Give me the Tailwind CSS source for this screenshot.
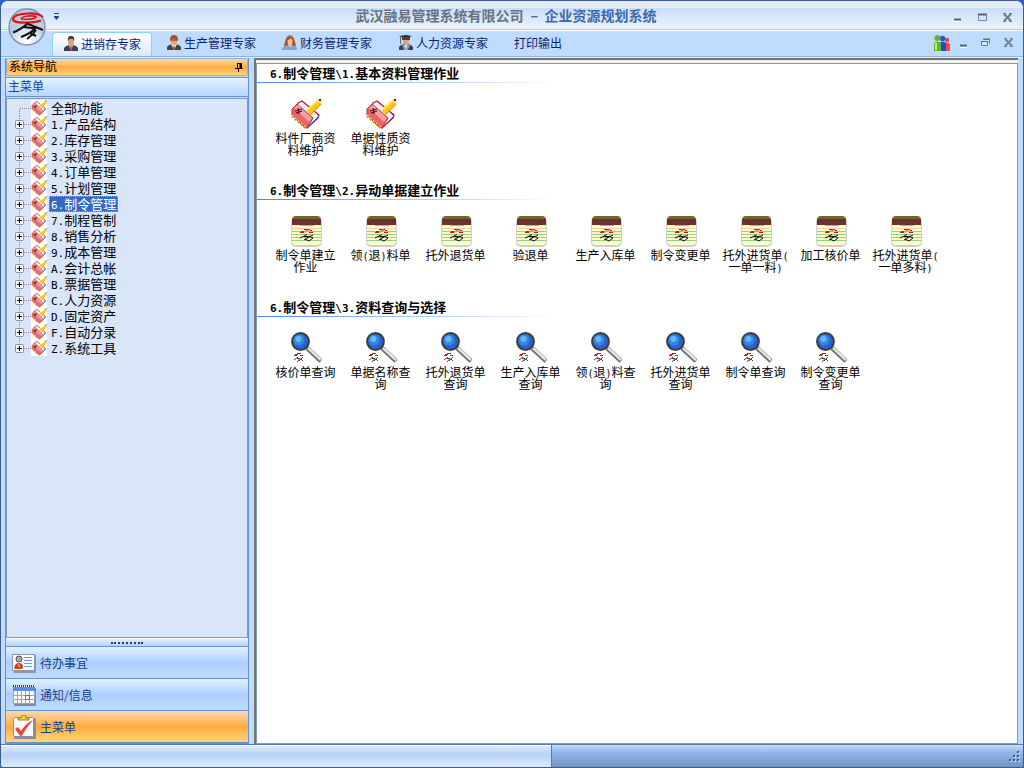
<!DOCTYPE html>
<html lang="zh-CN">
<head>
    <meta charset="UTF-8">
    <meta name="viewport" content="width=device-width, initial-scale=1.0">
    <title>武汉融易管理系统有限公司 - 企业资源规划系统</title>
    <script src="https://cdn.jsdelivr.net/npm/@tailwindcss/browser@4"></script>
</head>
<body class="bg-[#2f62d0] font-['Noto_Sans_CJK_SC',sans-serif] text-xs text-black">

    <!-- Icon sprites -->
    <svg class="hidden">
        <symbol id="book" viewBox="0 0 32 32">
            <path d="M8 5L12 3L29 17L28 20L17 30L5 12Z" fill="#e4f0fc" stroke="#c01830" stroke-width="1.3"/>
            <path d="M26 15L29 18L19 28" fill="none" stroke="#3c4ca0" stroke-width="1"/>
            <path d="M2 11L7 6L23 20L17 30L13 28L2 17Z" fill="#ea6468" stroke="#c03040"/>
            <path d="M4 10L8 7L22 20L19 24Z" fill="#f4a0a0"/>
            <path d="M5 13L12 11M8 10L9 16M6 15L12 13" stroke="#501020" stroke-width="1.2"/>
            <path d="M2 18L16 30" stroke="#c8901c" stroke-width="2.6" stroke-dasharray="2 2"/>
            <path d="M2 17L16 29" stroke="#ffe860" stroke-dasharray="2 2"/>
            <path d="M18 14L29 4" stroke="#ffc814" stroke-width="5.500"/>
            <path d="M17 12L28 2" stroke="#fff06a" stroke-width="1.600"/>
            <path d="M20 17L31 6" stroke="#f09a18" stroke-width="1.200"/>
            <path d="M27 1L31 1L32 5L30 6Z" fill="#f0dc90"/>
            <path d="M29 1h2v2h-2z" fill="#333"/>
        </symbol>
        <symbol id="note" viewBox="0 0 32 32">
            <rect x="1" y="2" width="31" height="30" rx="5" fill="#cfcfcf"/>
            <rect x="2" y="1" width="29" height="29" rx="4" fill="#fffcc4"/>
            <path d="M2 5Q2 1 6 1H27Q31 1 31 5Z" fill="#6b6a2c"/>
            <path d="M2 4H31V10H2Z" fill="#6b3030"/>
            <path d="M10 10.500H24" stroke="#b9a9a0"/>
            <path d="M2 13.500H31" stroke="#f3cdb8"/>
            <path d="M2 16.500H31M2 19.500H31M2 22.500H31M2 25.500H31" stroke="#94cf94"/>
            <path d="M10 17.500H14M19 17.500H23" stroke="#d81010"/>
            <path d="M11 16.500H15M20 15.500H22M14 14.500H20" stroke="#d81010"/>
            <path d="M14 17L19 15" stroke="#f08080" stroke-width="1.500"/>
            <path d="M10 23L17 19.500M14 21.500H19L14 25M17 23L23 20M19 21L23 23L19 26L15 24" fill="none" stroke="#111"/>
        </symbol>
        <symbol id="lens" viewBox="0 0 32 32">
            <path d="M17 16L31 29" stroke="#6e6e6e" stroke-width="4.500"/>
            <path d="M18 16L31 28" stroke="#e6e6e6" stroke-width="2.400"/>
            <circle cx="10.500" cy="9.500" r="8.400" fill="#2a62d0" stroke="#3c3c3c" stroke-width="2"/>
            <circle cx="9" cy="8" r="5.500" fill="#3388e6"/>
            <circle cx="8.500" cy="7" r="3" fill="#64b8fa"/>
            <path d="M4 23.500H7M5 22.500H8M10 23.500H13M7 21.500H11" stroke="#d81010"/>
            <path d="M4 28L8 25M7 26.500H10L7 30M9 29L13 25M11 27L13 29" fill="none" stroke="#333" stroke-width="0.900"/>
        </symbol>
        <symbol id="man" viewBox="0 0 16 16">
            <path d="M1 15V12Q2 10 6 9H10Q14 10 15 12V15Z" fill="#36415f"/>
            <path d="M6 9L8 15L10 9Z" fill="#fff"/>
            <path d="M8 10V15" stroke="#d02020" stroke-width="1.400"/>
            <ellipse cx="8" cy="5.500" rx="3" ry="4.500" fill="#d9a27a"/>
            <path d="M5 5Q4 0 8 0T11 5Q10 2 8 3Q6 2 5 5Z" fill="#44362c"/>
        </symbol>
        <symbol id="worker" viewBox="0 0 16 16">
            <path d="M1 15V12Q2 10 6 9H10Q14 10 15 12V15Z" fill="#40454c"/>
            <path d="M5 9L8 15L11 9Z" fill="#fff"/>
            <path d="M8 11V15" stroke="#c83010" stroke-width="1.400"/>
            <ellipse cx="8" cy="6" rx="3.200" ry="4.500" fill="#e0aa78"/>
            <path d="M4 5Q4 0 8 0T12 5Q8 3 4 5Z" fill="#b5501c"/>
            <path d="M4 5H12" stroke="#7a3010"/>
        </symbol>
        <symbol id="woman" viewBox="0 0 16 16">
            <path d="M2 11Q4 0 8 0T14 11Z" fill="#b0501e"/>
            <path d="M0 15V13Q2 11 6 10H10Q14 11 15 13V15Z" fill="#7ba4da"/>
            <path d="M6 9L8 13L10 9Z" fill="#f2c39c"/>
            <ellipse cx="8" cy="6.500" rx="2.500" ry="3.500" fill="#f0bf98"/>
            <path d="M5 5Q8 5 9 3Q10 5 11 5V3L8 1L5 3Z" fill="#b0501e"/>
            <path d="M6 1H10" stroke="#8aa0c8"/>
        </symbol>
        <symbol id="graduate" viewBox="0 0 16 16">
            <path d="M1 15V12Q2 10 6 9H10Q14 10 15 12V15Z" fill="#38404e"/>
            <path d="M4 10L6 15H10L12 10Z" fill="#7da7dc"/>
            <path d="M6 9L8 13L10 9Z" fill="#fff"/>
            <ellipse cx="8" cy="6.500" rx="3" ry="4" fill="#d9a27a"/>
            <path d="M1 1L8 0L14 1L8 4Z" fill="#2c2f38"/>
            <path d="M4 2H12V5H4Z" fill="#41454f"/>
            <path d="M2.500 2V9" stroke="#666"/>
        </symbol>
        <symbol id="branch" viewBox="0 0 26 16">
            <path d="M8.500 0V16M13 8.500H21" stroke="#8a8a8a" stroke-dasharray="1 1"/>
        </symbol>
        <symbol id="branch-first" viewBox="0 0 26 16">
            <path d="M8.500 9V16M9 8.500H21" stroke="#8a8a8a" stroke-dasharray="1 1"/>
        </symbol>
        <symbol id="branch-last" viewBox="0 0 26 16">
            <path d="M8.500 0V8M13 8.500H21" stroke="#8a8a8a" stroke-dasharray="1 1"/>
        </symbol>
        <symbol id="plus" viewBox="0 0 26 16">
            <rect x="4.500" y="4.500" width="8" height="8" rx="1" fill="#f6f4ee" stroke="#7f92ad"/>
            <path d="M6 8.500H11M8.500 6V11" stroke="#000"/>
        </symbol>
    </svg>

    <div class="relative flex h-screen min-h-[480px] flex-col overflow-hidden rounded-t-lg rounded-b-sm border border-[#3c5a8c] bg-[#bfdbff]">

        <!-- Title bar -->
        <header class="flex h-[29px] shrink-0 items-center border-b border-[#a9cdf3] bg-linear-to-b from-[#e4ecfa] from-25% via-[#cbdef7] via-25% to-[#e8f3fe]">
            <div class="flex w-[62px] justify-end pt-1">
                <button type="button" aria-label="自定义快速访问工具栏" class="h-3 w-3">
                    <svg viewBox="0 0 12 12" class="h-3 w-3"><path d="M3 2.500H8M3 5.500H8" stroke="#1e4596"/><path d="M3 6H8L5.500 9Z" fill="#1e4596"/></svg>
                </button>
            </div>
            <h1 class="flex-1 text-center text-sm font-bold text-[#69727f]">武汉融易管理系统有限公司 <span class="ml-1 text-[#3e6aaa]">– &nbsp;企业资源规划系统</span></h1>
            <div class="flex w-[74px] gap-[9px] pt-1">
                <button type="button" aria-label="最小化" class="h-4 w-4"><svg viewBox="0 0 16 16" class="h-4 w-4"><path d="M5 10.500H12" stroke="#5b6470" stroke-width="2"/><path d="M5 12.500H12" stroke="#fff"/></svg></button>
                <button type="button" aria-label="最大化" class="h-4 w-4"><svg viewBox="0 0 16 16" class="h-4 w-4"><path d="M4.500 5.500H12.500V11.500H4.500Z" fill="#d7e6fa" stroke="#7388a8"/><path d="M4 5.500H13" stroke="#5b6470" stroke-width="2"/></svg></button>
                <button type="button" aria-label="关闭" class="h-4 w-4"><svg viewBox="0 0 16 16" class="h-4 w-4"><path d="M5 5L12 12M12 5L5 12" stroke="#6d7c92" stroke-width="2"/><path d="M4 4.500H7M10 4.500H13M4 12.500H7M10 12.500H13" stroke="#6d7c92"/></svg></button>
            </div>
        </header>

        <!-- Ribbon tabs -->
        <nav class="flex h-[27px] shrink-0 items-end border-t border-b border-t-white border-b-[#8db2e3] bg-[#bfdbff] pl-[51px] text-[#0b1f73]">
            <button type="button" class="mr-[1px] flex h-6 items-center gap-[2px] rounded-t-sm border border-b-0 border-[#8fd0ee] bg-linear-to-b from-white to-[#dbe8f9] px-[10px] pb-[2px]"><svg class="h-4 w-4"><use href="#man"/></svg>进销存专家</button>
            <button type="button" class="flex h-6 items-center gap-[2px] px-[13px] pb-[2px]"><svg class="h-4 w-4"><use href="#worker"/></svg>生产管理专家</button>
            <button type="button" class="flex h-6 items-center gap-[2px] px-[13px] pb-[2px]"><svg class="h-4 w-4"><use href="#woman"/></svg>财务管理专家</button>
            <button type="button" class="flex h-6 items-center gap-[2px] px-[13px] pb-[2px]"><svg class="h-4 w-4"><use href="#graduate"/></svg>人力资源专家</button>
            <button type="button" class="flex h-6 items-center px-[13px] pb-[2px]">打印输出</button>
            <div class="ml-auto flex h-6 items-center gap-[6px] pr-[7px] pb-[2px]">
                <button type="button" aria-label="用户" class="h-4 w-4">
                    <svg viewBox="0 0 16 16" class="h-4 w-4">
                        <circle cx="13" cy="5" r="2.300" fill="#e8484c"/><path d="M10 16V9Q13 6 16 9V16Z" fill="#ea4c52"/>
                        <circle cx="8.500" cy="3.500" r="2.800" fill="#2858c8"/><path d="M5 16V8Q9 5 12 8V16Z" fill="#1e50c4"/>
                        <circle cx="3.500" cy="3" r="3" fill="#5cb82a"/><path d="M0 16V8Q3 5 7 8V16Z" fill="#5cb82a"/><path d="M2 8V15" stroke="#b8ec90" stroke-width="2"/>
                    </svg>
                </button>
                <button type="button" aria-label="最小化子窗口" class="h-4 w-4"><svg viewBox="0 0 16 16" class="h-4 w-4"><path d="M4 10.500H11" stroke="#5b6470" stroke-width="2"/><path d="M4 12.500H11" stroke="#fff"/></svg></button>
                <button type="button" aria-label="还原子窗口" class="h-4 w-4"><svg viewBox="0 0 16 16" class="h-4 w-4"><path d="M5.500 4.500H11.500V8.500M3.500 6.500H9.500V10.500H3.500Z" fill="#d7e6fa" stroke="#6d7c92"/><path d="M5 4H12M3 6.500H10" stroke="#5b6470"/></svg></button>
                <button type="button" aria-label="关闭子窗口" class="h-4 w-4"><svg viewBox="0 0 16 16" class="h-4 w-4"><path d="M5 4L12 11M12 4L5 11" stroke="#7b8492" stroke-width="2"/><path d="M4 3.500H7M10 3.500H13M4 11.500H7M10 11.500H13" stroke="#7b8492"/></svg></button>
            </div>
        </nav>

        <!-- Application button, overlaps title bar and tabs -->
        <button type="button" aria-label="应用程序菜单" class="absolute top-[7px] left-[7px] h-[38px] w-[38px]">
            <svg viewBox="0 0 38 38" class="h-[38px] w-[38px]">
                <defs><radialGradient id="orb" cy="0.9"><stop offset="0" stop-color="#fff"/><stop offset="0.600" stop-color="#dde6f2"/><stop offset="1" stop-color="#bccbe0"/></radialGradient></defs>
                <circle cx="19" cy="19" r="18" fill="url(#orb)" stroke="#7f8fa8" stroke-width="1.300"/>
                <path d="M35 9Q30 5 20 5.500Q6 6 5 11Q5 15 18 14.500Q28 14.500 33 12.500" fill="none" stroke="#e01414" stroke-width="2.200"/>
                <path d="M13 11Q26 12 28 9Q27 7.500 20 8Q14 8.500 13 11" fill="none" stroke="#e01414" stroke-width="1.700"/>
                <path d="M20 15Q14 21 5 24.500M20 16L35 22M16 19L27 20.500Q22 26 13 29M28 22Q25 27 19 31M22 25L28 28" fill="none" stroke="#111" stroke-width="2"/>
            </svg>
        </button>

        <div class="flex min-h-0 flex-1 border-t border-[#e3efff]">
            <!-- Navigation pane -->
            <aside class="flex w-[248px] shrink-0 flex-col border-r border-[#6593cf] pl-1">
                <div class="flex h-full flex-col border-l border-[#6593cf]">
                    <div class="flex h-[18px] shrink-0 items-center justify-between rounded-xs border border-[#8fb0e0] bg-linear-to-b from-[#ffd9a3] via-[#ffad47] to-[#ffd274] pl-[2px]">
                        <h2 class="pb-[2px]">系统导航</h2>
                        <button type="button" aria-label="自动隐藏" class="h-4 w-4"><svg viewBox="0 0 16 16" class="h-4 w-4"><path d="M6.500 4.500H10.500V9.500M6.500 4V9.500M4 9.500H12M7.500 10V13" fill="none" stroke="#000"/><path d="M9.500 4V9" stroke="#000" stroke-width="2"/></svg></button>
                    </div>
                    <h3 class="mt-[1px] flex h-5 shrink-0 items-center border-y border-[#6593cf] bg-linear-to-b from-[#e6f2ff] to-[#b5d6ff] px-[2px] pb-[2px] text-[#1b4495]">主菜单</h3>
                    <ul id="tree" class="mt-[1px] min-h-0 flex-1 overflow-hidden border border-[#7f9db9] bg-[#d9e5f8] pt-[1px] pl-1 text-[13px] leading-4"></ul>
                    <div class="flex h-2 shrink-0 items-center justify-center border-t border-white bg-linear-to-b from-[#e3efff] to-[#b3d3fb]">
                        <div class="w-8 border-t-2 border-dotted border-[#27416b]"></div>
                    </div>
                    <button type="button" class="flex h-8 shrink-0 items-center gap-1 border-t border-[#6593cf] bg-linear-to-b from-[#e3f1ff] via-[#adcfff] via-50% to-[#c0dbff] pl-[6px] text-[#15428b]">
                        <svg viewBox="0 0 24 24" class="h-6 w-6">
                            <path d="M1 4H24V22H2V21Z" fill="#8b9bb4"/><rect x="0.500" y="3.500" width="22" height="16" fill="#f6f9fd" stroke="#8b95a5"/>
                            <circle cx="7" cy="8" r="3" fill="#aaa" stroke="#555"/><path d="M2 17Q3 12 7 12T11 16L10 18H3Z" fill="#cb4120"/><path d="M7 12L6 15L8 16Z" fill="#f4d0a0"/>
                            <path d="M12 6.500H20M12 9.500H20M12 12.500H20M12 15.500H20" stroke="#6d9ae0"/>
                        </svg>待办事宜
                    </button>
                    <button type="button" class="flex h-8 shrink-0 items-center gap-1 border-t border-[#6593cf] bg-linear-to-b from-[#e3f1ff] via-[#adcfff] via-50% to-[#c0dbff] pl-[6px] text-[#15428b]">
                        <svg viewBox="0 0 24 24" class="h-6 w-6">
                            <path d="M2 5H24V23H2Z" fill="#7f8da4"/><rect x="1" y="3" width="22" height="18" fill="#fff"/>
                            <path d="M1 4H23V8H1Z" fill="#5b8de0"/><path d="M1 3H23" stroke="#333" stroke-width="2" stroke-dasharray="1 1"/>
                            <path d="M1.500 8V21M5.500 8V21M9.500 8V21M13.500 8V21M17.500 8V21M22.500 8V21M1 12.500H23M1 16.500H23M1 20.500H23" stroke="#98a6bd"/>
                            <rect x="13.500" y="12.500" width="4" height="4" fill="#fff" stroke="#e04a20"/>
                        </svg>通知/信息
                    </button>
                    <button type="button" class="flex h-8 shrink-0 items-center gap-1 border-t border-[#6593cf] bg-linear-to-b from-[#ffd8a8] via-[#ffab3f] to-[#fed775] pl-[6px] text-[#15428b]">
                        <svg viewBox="0 0 24 24" class="h-6 w-6">
                            <rect x="2" y="3" width="22" height="21" rx="1" fill="#8a8fa0"/><rect x="1.500" y="2.500" width="20" height="19" rx="1" fill="#fafbff" stroke="#8793a8"/>
                            <path d="M6 5V3H9Q9 0 12 0T14 3H17V5Z" fill="#f2ce4b" stroke="#a8851c"/>
                            <path d="M3 14L6 12L9 16Q14 8 21 5Q14 13 9 22Z" fill="#e5493a"/>
                        </svg>主菜单
                    </button>
                    <div class="h-[2px] shrink-0 bg-[#6593cf]"></div>
                </div>
            </aside>

            <!-- Workspace -->
            <main class="ml-[5px] mr-[5px] flex min-w-0 flex-1 flex-col border-t-2 border-l-2 border-[#76756a] bg-[#f1f1ee] pt-[3px]">
                <div id="workspace" class="flex min-h-0 flex-1 flex-col gap-6 overflow-hidden border border-[#7f9db9] bg-white"></div>
            </main>
        </div>

        <!-- Status bar -->
        <footer class="flex h-[23px] shrink-0 border-t border-[#567db0]">
            <div class="flex-[552] border-t border-white bg-linear-to-b from-[#dbe9fb] via-[#b9d3f5] via-40% to-[#dbebff]"></div>
            <div class="flex flex-[470] items-end justify-end border-l border-[#567db0] bg-linear-to-b from-[#c2dcfb] from-0% via-[#8fb5e8] via-35% to-[#7394c1] pr-[2px] pb-1">
                <svg viewBox="0 0 12 12" class="h-3 w-3"><path d="M8 0h2v2h-2zM4 4h2v2h-2zM8 4h2v2h-2zM0 8h2v2h-2zM4 8h2v2h-2zM8 8h2v2h-2z" transform="translate(1 1)" fill="#c9defa"/><path d="M8 0h2v2h-2zM4 4h2v2h-2zM8 4h2v2h-2zM0 8h2v2h-2zM4 8h2v2h-2zM8 8h2v2h-2z" fill="#39588c"/></svg>
            </div>
        </footer>
    </div>

    <script>
        const menu = ['全部功能', '1.产品结构', '2.库存管理', '3.采购管理', '4.订单管理', '5.计划管理', '6.制令管理', '7.制程管制',
            '8.销售分析', '9.成本管理', 'A.会计总帐', 'B.票据管理', 'C.人力资源', 'D.固定资产', 'F.自动分录', 'Z.系统工具'];
        const active = '6.制令管理';

        // Each item is a list of label lines
        const sections = [
            { title: '6.制令管理\\1.基本资料管理作业', icon: 'book', items: [['料件厂商资', '料维护'], ['单据性质资', '料维护']] },
            { title: '6.制令管理\\2.异动单据建立作业', icon: 'note', items: [['制令单建立', '作业'], ['领(退)料单'], ['托外退货单'], ['验退单'], ['生产入库单'], ['制令变更单'], ['托外进货单(', '一单一料)'], ['加工核价单'], ['托外进货单(', '一单多料)']] },
            { title: '6.制令管理\\3.资料查询与选择', icon: 'lens', items: [['核价单查询'], ['单据名称查', '询'], ['托外退货单', '查询'], ['生产入库单', '查询'], ['领(退)料查', '询'], ['托外进货单', '查询'], ['制令单查询'], ['制令变更单', '查询']] }
        ];

        // Half-width characters take half the width of a Chinese one
        const mono = (text, cls) => text.replace(/[!-~]+/g, m => `<span class="${cls}">${m}</span>`);
        const small = "font-['DejaVu_Sans_Mono',monospace] text-[10px]";
        const medium = "font-['DejaVu_Sans_Mono',monospace] text-[11px]";

        document.getElementById('tree').innerHTML = menu.map((name, i) => {
            const line = i === 0 ? 'branch-first' : i === menu.length - 1 ? 'branch-last' : 'branch';
            const label = name === active
                ? 'ml-[2px] h-4 bg-[#316ac5] px-[2px] text-white outline outline-dotted -outline-offset-1 outline-[#e8a33d]'
                : 'ml-[2px] h-4 px-[2px]';
            return `<li class="flex h-4 items-center">
                <svg class="h-4 w-5" viewBox="0 0 20 16"><use href="#${line}" width="26" height="16"/>${i ? '<use href="#plus" width="26" height="16"/>' : ''}</svg>
                <svg class="h-4 w-4 bg-white"><use href="#book"/></svg>
                <button type="button" class="${label}">${mono(name, medium)}</button>
            </li>`;
        }).join('');

        document.getElementById('workspace').innerHTML = sections.map(s => `
            <section>
                <h2 class="flex h-[18px] items-center pl-[13px] text-[13px] font-bold"><span>${mono(s.title, medium)}</span></h2>
                <div class="h-px w-[300px] bg-linear-to-r from-[#3c8cf0] to-white"></div>
                <div class="flex flex-wrap pt-[15px] pl-[11px]">
                    ${s.items.map(lines => `<button type="button" class="flex w-[75px] flex-col items-center">
                        <svg class="mb-[2px] h-8 w-8"><use href="#${s.icon}"/></svg>
                        <span class="flex h-[25px] flex-col items-center leading-3 whitespace-nowrap">${lines.map(l => `<span class="block h-3">${mono(l, small)}</span>`).join('')}</span>
                    </button>`).join('')}
                </div>
            </section>`).join('');
    </script>
</body>
</html>
